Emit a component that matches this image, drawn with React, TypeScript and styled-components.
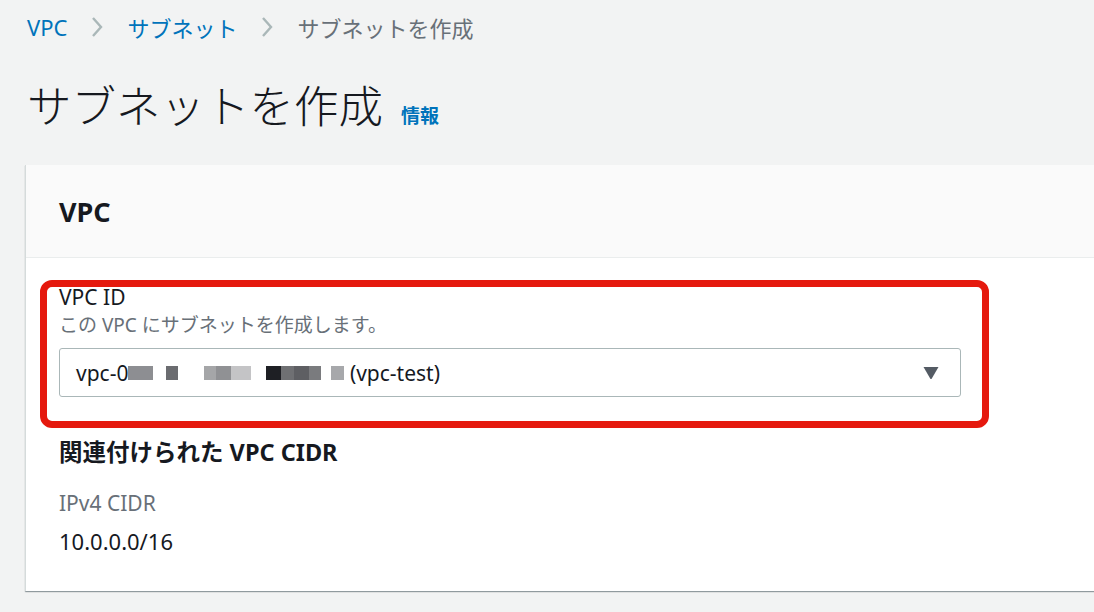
import React from 'react';
import styled, { createGlobalStyle } from 'styled-components';

const GlobalStyle = createGlobalStyle`
  html, body {
    margin: 0;
    padding: 0;
    background: #f2f3f3;
  }
  body {
    font-family: "Noto Sans", "Noto Sans CJK JP", sans-serif;
    color: #16191f;
    overflow: hidden;
  }
`;

const colors = {
  link: '#0073bb',
  text: '#16191f',
  secondary: '#687078',
  chevron: '#aab7b8',
  border: '#aab7b8',
  divider: '#eaeded',
  highlight: '#e5190e',
};

const Page = styled.div`
  width: 1094px;
  height: 612px;
  padding: 10px 0 0 27px;
  box-sizing: border-box;
  overflow: hidden;
`;

const Breadcrumbs = styled.nav`
  display: flex;
  align-items: center;
  height: 34px;
  font-size: 22px;
  gap: 23px;
`;

const Crumb = styled.a<{ $current?: boolean }>`
  color: ${p => (p.$current ? colors.secondary : colors.link)};
  text-decoration: none;
  white-space: nowrap;
`;

const Chevron = () => (
  <svg width="14" height="22" viewBox="0 0 14 22" fill="none">
    <path
      d="M3 2 L11 11 L3 20"
      stroke={colors.chevron}
      strokeWidth="2.4"
      strokeLinecap="butt"
    />
  </svg>
);

const TitleRow = styled.div`
  display: flex;
  align-items: baseline;
  gap: 18px;
  margin-top: 32px;
`;

const Title = styled.h1`
  margin: 0;
  font-size: 44.5px;
  font-weight: 300;
  line-height: 60px;
  color: ${colors.text};
`;

const InfoLink = styled.a`
  font-size: 19px;
  font-weight: 700;
  color: ${colors.link};
  text-decoration: none;
`;

const Card = styled.section`
  margin-top: 29px;
  margin-left: -2px;
  width: 1100px;
  background: #fff;
  border-left: 1px solid #d5dbdb;
  box-shadow: 0 1px 1px 0 rgba(0, 28, 36, 0.3), 1px 1px 1px 0 rgba(0, 28, 36, 0.15);
`;

const CardHeader = styled.header`
  height: 92px;
  display: flex;
  align-items: center;
  padding-left: 33px;
  background: #fafafa;
  border-bottom: 1px solid ${colors.divider};
`;

const CardTitle = styled.h2`
  margin: 0;
  font-size: 27px;
  font-weight: 700;
`;

const CardBody = styled.div`
  padding: 26px 33px 36px;
`;

const Field = styled.div`
  position: relative;
  width: 902px;
`;

const Highlight = styled.div`
  position: absolute;
  top: -4px;
  left: -19px;
  right: -28px;
  bottom: -31px;
  border: 7px solid ${colors.highlight};
  border-radius: 12px;
  pointer-events: none;
`;

const Label = styled.div`
  font-size: 21px;
  line-height: 26px;
`;

const Description = styled.div`
  margin-top: 3px;
  font-size: 19px;
  line-height: 24px;
  color: ${colors.secondary};
`;

const Select = styled.div`
  margin-top: 11px;
  height: 49px;
  box-sizing: border-box;
  border: 1px solid ${colors.border};
  border-radius: 3px;
  display: flex;
  align-items: center;
  justify-content: space-between;
  padding: 0 20px 0 16px;
  font-size: 21px;
`;

const SelectValue = styled.span`
  display: flex;
  align-items: center;
  white-space: nowrap;
`;

const Mask = styled.span<{ $w: number; $gap: number; $c: string }>`
  display: inline-block;
  width: ${p => p.$w}px;
  height: 14px;
  margin-left: ${p => p.$gap}px;
  background: ${p => p.$c};
`;

const masks = [
  { w: 25, gap: 0, c: '#8d8e92' },
  { w: 12, gap: 13, c: '#6b6c70' },
  { w: 12, gap: 26, c: '#a5a6a8' },
  { w: 15, gap: 0, c: '#909194' },
  { w: 20, gap: 0, c: '#c4c4c6' },
  { w: 15, gap: 15, c: '#1e1f24' },
  { w: 13, gap: 0, c: '#6f7073' },
  { w: 15, gap: 0, c: '#5e5f63' },
  { w: 12, gap: 0, c: '#7a7b7e' },
  { w: 13, gap: 10, c: '#a7a8ab' },
];

const Caret = () => (
  <svg width="18" height="14" viewBox="0 0 18 14">
    <path d="M1.5 1 L16.5 1 L9.8 12.6 Q9 13.6 8.2 12.6 Z" fill="#545b64" />
  </svg>
);

const SectionTitle = styled.h3`
  margin: 40px 0 0;
  font-size: 23.5px;
  font-weight: 700;
  line-height: 30px;
`;

const KeyLabel = styled.div`
  margin-top: 22px;
  font-size: 21px;
  line-height: 28px;
  color: ${colors.secondary};
`;

const Value = styled.div`
  margin-top: 10px;
  font-size: 22px;
  line-height: 28px;
`;

export default function App() {
  return (
    <>
      <GlobalStyle />
      <Page>
        <Breadcrumbs>
          <Crumb href="#">VPC</Crumb>
          <Chevron />
          <Crumb href="#">サブネット</Crumb>
          <Chevron />
          <Crumb $current>サブネットを作成</Crumb>
        </Breadcrumbs>
        <TitleRow>
          <Title>サブネットを作成</Title>
          <InfoLink href="#">情報</InfoLink>
        </TitleRow>
        <Card>
          <CardHeader>
            <CardTitle>VPC</CardTitle>
          </CardHeader>
          <CardBody>
            <Field>
              <Label>VPC ID</Label>
              <Description>この VPC にサブネットを作成します。</Description>
              <Select>
                <SelectValue>
                  vpc-0
                  {masks.map((m, i) => (
                    <Mask key={i} $w={m.w} $gap={m.gap} $c={m.c} />
                  ))}
                  &nbsp;(vpc-test)
                </SelectValue>
                <Caret />
              </Select>
              <Highlight />
            </Field>
            <SectionTitle>関連付けられた VPC CIDR</SectionTitle>
            <KeyLabel>IPv4 CIDR</KeyLabel>
            <Value>10.0.0.0/16</Value>
          </CardBody>
        </Card>
      </Page>
    </>
  );
}
